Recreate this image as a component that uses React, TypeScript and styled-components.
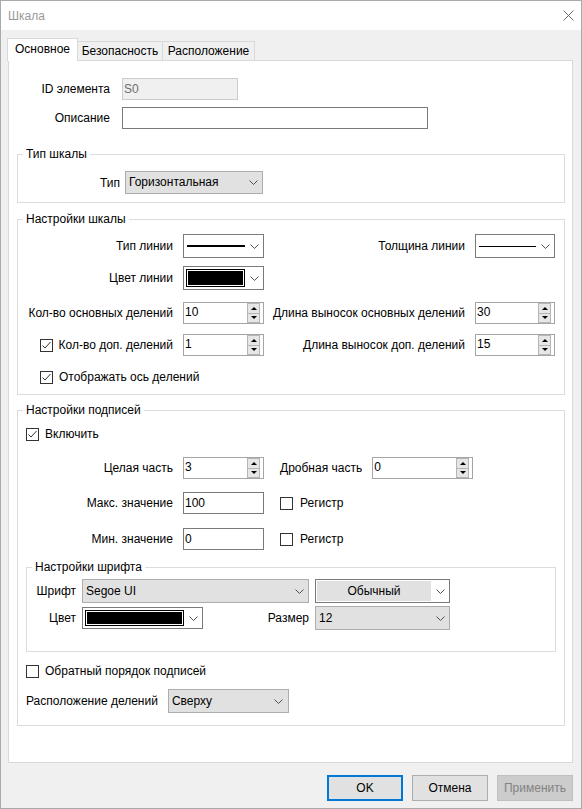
import React from "react";
import styled, { createGlobalStyle } from "styled-components";

const GlobalStyle = createGlobalStyle`
  html, body { margin: 0; padding: 0; background: #ffffff; }
  body {
    font-family: "Segoe UI", "Liberation Sans", Arial, sans-serif;
    font-size: 12px;
    color: #000000;
  }
  * { box-sizing: border-box; }
`;

const Window = styled.div`
  width: 582px;
  height: 809px;
  border: 1px solid #aaaaaa;
  background: #f0f0f0;
  display: flex;
  flex-direction: column;
`;

const TitleBar = styled.div`
  height: 29px;
  flex: none;
  background: #ffffff;
  display: flex;
  align-items: center;
  justify-content: space-between;
  padding: 0 7px;
  color: #999999;
`;

const TitleText = styled.span`
  padding-top: 1px;
`;

const Body = styled.div`
  flex: 1;
  display: flex;
  flex-direction: column;
  padding: 8px 8px 7px 7px;
`;

const TabStrip = styled.div`
  height: 22px;
  display: flex;
  align-items: flex-end;
`;

const Tab = styled.div<{ $active?: boolean; $width: number }>`
  position: relative;
  z-index: ${(p) => (p.$active ? 1 : 0)};
  width: ${(p) => p.$width}px;
  height: ${(p) => (p.$active ? 23 : 19)}px;
  margin-left: ${(p) => (p.$active ? -1 : 0)}px;
  margin-bottom: ${(p) => (p.$active ? -1 : 0)}px;
  border: 1px solid #d9d9d9;
  border-bottom: none;
  border-left-width: ${(p) => (p.$active ? 1 : 0)}px;
  background: ${(p) => (p.$active ? "#ffffff" : "#f0f0f0")};
  display: flex;
  align-items: center;
  justify-content: center;
  padding-bottom: ${(p) => (p.$active ? 2 : 0)}px;
`;

const Panel = styled.div`
  height: 703px;
  flex: none;
  background: #ffffff;
  border: 1px solid #d9d9d9;
  padding: 17px 7px 0 8px;
`;

const FieldRow = styled.div<{ $top?: number; $gap?: number; $height?: number; $left?: number }>`
  display: flex;
  align-items: center;
  height: ${(p) => p.$height ?? 22}px;
  margin-top: ${(p) => p.$top ?? 0}px;
  padding-left: ${(p) => p.$left ?? 0}px;
  gap: ${(p) => p.$gap ?? 12}px;
`;

const FieldLabel = styled.div<{ $width?: number }>`
  flex: none;
  width: ${(p) => (p.$width ? `${p.$width}px` : "auto")};
  text-align: right;
  white-space: nowrap;
`;

const TextBox = styled.div<{ $width: number; $disabled?: boolean }>`
  flex: none;
  width: ${(p) => p.$width}px;
  height: 22px;
  border: 1px solid ${(p) => (p.$disabled ? "#cccccc" : "#7a7a7a")};
  background: ${(p) => (p.$disabled ? "#f0f0f0" : "#ffffff")};
  color: ${(p) => (p.$disabled ? "#6d6d6d" : "#000000")};
  display: flex;
  align-items: center;
  padding: 0 0 1px 1px;
`;

const Group = styled.div<{ $top: number; $pad: string; $inset?: number }>`
  position: relative;
  margin-top: ${(p) => p.$top}px;
  margin-left: ${(p) => p.$inset ?? 0}px;
  margin-right: ${(p) => p.$inset ?? 0}px;
  border: 1px solid #dcdcdc;
  padding: ${(p) => p.$pad};
`;

const GroupTitle = styled.div`
  position: absolute;
  top: -8px;
  left: 5px;
  padding: 0 3px;
  line-height: 15px;
  background: #ffffff;
  white-space: nowrap;
`;

const Combo = styled.div<{ $width: number; $height: number; $variant?: "flat" | "white" | "edit" }>`
  flex: none;
  width: ${(p) => p.$width}px;
  height: ${(p) => p.$height}px;
  border: 1px solid ${(p) => (p.$variant === "flat" || !p.$variant ? "#adadad" : "#7a7a7a")};
  background: ${(p) => (p.$variant === "flat" || !p.$variant ? "#e1e1e1" : "#ffffff")};
  display: flex;
  align-items: center;
  padding: ${(p) => (p.$variant === "white" ? "2px 0 2px 2px" : p.$variant === "edit" ? "1px 0 1px 1px" : "0 0 0 3px")};
`;

const ComboText = styled.div`
  flex: 1;
  white-space: nowrap;
  padding-bottom: 1px;
`;

const ComboFace = styled.div`
  flex: 1;
  align-self: stretch;
  background: #e1e1e1;
  display: flex;
  align-items: center;
  justify-content: center;
  padding-bottom: 1px;
`;

const ChevronArea = styled.div`
  flex: none;
  width: 18px;
  display: flex;
  align-items: center;
  justify-content: center;
`;

const Swatch = styled.div`
  flex: 1;
  align-self: stretch;
  background: #000000;
  border: 1px solid #000000;
  box-shadow: inset 0 0 0 1px #ffffff;
`;

const LineSample = styled.div<{ $thickness: number }>`
  flex: 1;
  margin-left: 1px;
  height: ${(p) => p.$thickness}px;
  background: #000000;
`;

const SpinBox = styled.div<{ $width: number }>`
  flex: none;
  width: ${(p) => p.$width}px;
  height: 22px;
  border: 1px solid #a5a5a5;
  background: #ffffff;
  display: flex;
  align-items: stretch;
`;

const SpinValue = styled.div`
  flex: 1;
  display: flex;
  align-items: center;
  padding: 0 0 3px 1px;
`;

const SpinButtons = styled.div`
  flex: none;
  width: 13px;
  margin: 0 3px 0 0;
  padding: 0;
  display: flex;
  flex-direction: column;
`;

const SpinButton = styled.div<{ $down?: boolean }>`
  flex: 1;
  background: #e6e6e6;
  border: 1px solid #b5b5b5;
  border-top-width: ${(p) => (p.$down ? 0 : 1)}px;
  display: flex;
  align-items: center;
  justify-content: center;

  &::after {
    content: "";
    width: 0;
    height: 0;
    border-left: 3px solid transparent;
    border-right: 3px solid transparent;
    ${(p) => (p.$down ? "border-top: 3px solid #000;" : "border-bottom: 3px solid #000;")}
  }
`;

const CheckLine = styled.div<{ $gap?: number }>`
  display: flex;
  align-items: center;
  gap: ${(p) => p.$gap ?? 6}px;
  white-space: nowrap;
`;

const CheckBoxBox = styled.div`
  flex: none;
  width: 13px;
  height: 13px;
  border: 1px solid #333333;
  background: #ffffff;
  display: flex;
  align-items: center;
  justify-content: center;
`;

const ScaleRow = styled.div<{ $top?: number; $height: number }>`
  display: grid;
  grid-template-columns: 155px 81px 191px 80px;
  column-gap: 10px;
  align-items: center;
  height: ${(p) => p.$height}px;
  margin-top: ${(p) => p.$top ?? 0}px;
`;

const Cell = styled.div<{ $align?: "left" | "right" }>`
  display: flex;
  align-items: center;
  justify-content: ${(p) => (p.$align === "left" ? "flex-start" : "flex-end")};
  white-space: nowrap;
`;

const FontRow = styled.div<{ $top?: number }>`
  display: flex;
  align-items: center;
  height: 24px;
  margin-top: ${(p) => p.$top ?? 0}px;
  gap: 6px;
`;

const FontMiddle = styled.div`
  flex: none;
  width: 227px;
  display: flex;
  align-items: center;
  justify-content: space-between;
`;

const ButtonBar = styled.div`
  display: flex;
  justify-content: flex-end;
  gap: 9px;
  margin-top: 12px;
`;

const DialogButton = styled.div<{ $variant?: "default" | "normal" | "disabled" }>`
  width: 76px;
  height: 26px;
  display: flex;
  align-items: center;
  justify-content: center;
  padding-bottom: 1px;
  background: ${(p) => (p.$variant === "disabled" ? "#cccccc" : "#e1e1e1")};
  border: ${(p) =>
    p.$variant === "default"
      ? "2px solid #0078d7"
      : p.$variant === "disabled"
      ? "1px solid #bfbfbf"
      : "1px solid #adadad"};
  color: ${(p) => (p.$variant === "disabled" ? "#838383" : "#000000")};
`;

const Chevron = () => (
  <svg width="9" height="5" viewBox="0 0 9 5">
    <path d="M0.5 0.5 L4.5 4.5 L8.5 0.5" fill="none" stroke="#505050" strokeWidth="1" />
  </svg>
);

const CloseIcon = () => (
  <svg width="11" height="11" viewBox="0 0 11 11">
    <path d="M0.5 0.5 L10.5 10.5 M10.5 0.5 L0.5 10.5" fill="none" stroke="#6a6a6a" strokeWidth="1" />
  </svg>
);

const CheckBox = ({ checked }: { checked?: boolean }) => (
  <CheckBoxBox>
    {checked && (
      <svg width="11" height="11" viewBox="0 0 11 11">
        <path d="M1.5 5.5 L4 8 L9.5 2" fill="none" stroke="#333333" strokeWidth="1" />
      </svg>
    )}
  </CheckBoxBox>
);

const Spin = ({ value, width }: { value: string; width: number }) => (
  <SpinBox $width={width}>
    <SpinValue>{value}</SpinValue>
    <SpinButtons>
      <SpinButton />
      <SpinButton $down />
    </SpinButtons>
  </SpinBox>
);

export default function App() {
  return (
    <>
      <GlobalStyle />
      <Window>
        <TitleBar>
          <TitleText>Шкала</TitleText>
          <CloseIcon />
        </TitleBar>
        <Body>
          <TabStrip>
            <Tab $active $width={71}>Основное</Tab>
            <Tab $width={85}>Безопасность</Tab>
            <Tab $width={92}>Расположение</Tab>
          </TabStrip>
          <Panel>
            <FieldRow>
              <FieldLabel $width={93}>ID элемента</FieldLabel>
              <TextBox $width={116} $disabled>S0</TextBox>
            </FieldRow>
            <FieldRow $top={7}>
              <FieldLabel $width={93}>Описание</FieldLabel>
              <TextBox $width={306} />
            </FieldRow>

            <Group $top={25} $pad="16px 0 8px 0">
              <GroupTitle>Тип шкалы</GroupTitle>
              <FieldRow $gap={5} $height={23}>
                <FieldLabel $width={102}>Тип</FieldLabel>
                <Combo $width={138} $height={23}>
                  <ComboText>Горизонтальная</ComboText>
                  <ChevronArea><Chevron /></ChevronArea>
                </Combo>
              </FieldRow>
            </Group>

            <Group $top={16} $pad="14px 0 6px 0">
              <GroupTitle>Настройки шкалы</GroupTitle>
              <ScaleRow $height={24}>
                <Cell>Тип линии</Cell>
                <Combo $width={81} $height={24} $variant="white">
                  <LineSample $thickness={2} />
                  <ChevronArea><Chevron /></ChevronArea>
                </Combo>
                <Cell>Толщина линии</Cell>
                <Combo $width={80} $height={24} $variant="white">
                  <LineSample $thickness={1} />
                  <ChevronArea><Chevron /></ChevronArea>
                </Combo>
              </ScaleRow>
              <ScaleRow $height={24} $top={8}>
                <Cell>Цвет линии</Cell>
                <Combo $width={81} $height={24} $variant="white">
                  <Swatch />
                  <ChevronArea><Chevron /></ChevronArea>
                </Combo>
              </ScaleRow>
              <ScaleRow $height={22} $top={12}>
                <Cell>Кол-во основных делений</Cell>
                <Spin value="10" width={81} />
                <Cell>Длина выносок основных делений</Cell>
                <Spin value="30" width={80} />
              </ScaleRow>
              <ScaleRow $height={22} $top={10}>
                <Cell>
                  <CheckLine>
                    <CheckBox checked />
                    <span>Кол-во доп. делений</span>
                  </CheckLine>
                </Cell>
                <Spin value="1" width={81} />
                <Cell>Длина выносок доп. делений</Cell>
                <Spin value="15" width={80} />
              </ScaleRow>
              <FieldRow $top={10} $left={22}>
                <CheckLine>
                  <CheckBox checked />
                  <span>Отображать ось делений</span>
                </CheckLine>
              </FieldRow>
            </Group>

            <Group $top={15} $pad="12px 0 12px 0">
              <GroupTitle>Настройки подписей</GroupTitle>
              <FieldRow $left={8}>
                <CheckLine>
                  <CheckBox checked />
                  <span>Включить</span>
                </CheckLine>
              </FieldRow>
              <FieldRow $top={12} $gap={10}>
                <FieldLabel $width={155}>Целая часть</FieldLabel>
                <Spin value="3" width={81} />
                <FieldLabel style={{ marginLeft: 6 }}>Дробная часть</FieldLabel>
                <Spin value="0" width={101} />
              </FieldRow>
              <FieldRow $top={13} $gap={10}>
                <FieldLabel $width={155}>Макс. значение</FieldLabel>
                <TextBox $width={81}>100</TextBox>
                <CheckLine style={{ marginLeft: 6 }} $gap={7}>
                  <CheckBox />
                  <span>Регистр</span>
                </CheckLine>
              </FieldRow>
              <FieldRow $top={14} $gap={10}>
                <FieldLabel $width={155}>Мин. значение</FieldLabel>
                <TextBox $width={81}>0</TextBox>
                <CheckLine style={{ marginLeft: 6 }} $gap={7}>
                  <CheckBox />
                  <span>Регистр</span>
                </CheckLine>
              </FieldRow>

              <Group $top={17} $inset={8} $pad="11px 0 21px 0">
                <GroupTitle>Настройки шрифта</GroupTitle>
                <FontRow>
                  <FieldLabel $width={49}>Шрифт</FieldLabel>
                  <Combo $width={227} $height={24}>
                    <ComboText>Segoe UI</ComboText>
                    <ChevronArea><Chevron /></ChevronArea>
                  </Combo>
                  <Combo $width={135} $height={24} $variant="edit">
                    <ComboFace>Обычный</ComboFace>
                    <ChevronArea><Chevron /></ChevronArea>
                  </Combo>
                </FontRow>
                <FontRow $top={3}>
                  <FieldLabel $width={49}>Цвет</FieldLabel>
                  <FontMiddle>
                    <Combo $width={121} $height={22} $variant="white">
                      <Swatch />
                      <ChevronArea><Chevron /></ChevronArea>
                    </Combo>
                    <FieldLabel>Размер</FieldLabel>
                  </FontMiddle>
                  <Combo $width={135} $height={24}>
                    <ComboText>12</ComboText>
                    <ChevronArea><Chevron /></ChevronArea>
                  </Combo>
                </FontRow>
              </Group>

              <FieldRow $top={8} $left={8}>
                <CheckLine>
                  <CheckBox />
                  <span>Обратный порядок подписей</span>
                </CheckLine>
              </FieldRow>
              <FieldRow $top={7} $left={8} $gap={10} $height={24}>
                <FieldLabel>Расположение делений</FieldLabel>
                <Combo $width={121} $height={24}>
                  <ComboText>Сверху</ComboText>
                  <ChevronArea><Chevron /></ChevronArea>
                </Combo>
              </FieldRow>
            </Group>
          </Panel>
          <ButtonBar>
            <DialogButton $variant="default">OK</DialogButton>
            <DialogButton $variant="normal">Отмена</DialogButton>
            <DialogButton $variant="disabled">Применить</DialogButton>
          </ButtonBar>
        </Body>
      </Window>
    </>
  );
}
